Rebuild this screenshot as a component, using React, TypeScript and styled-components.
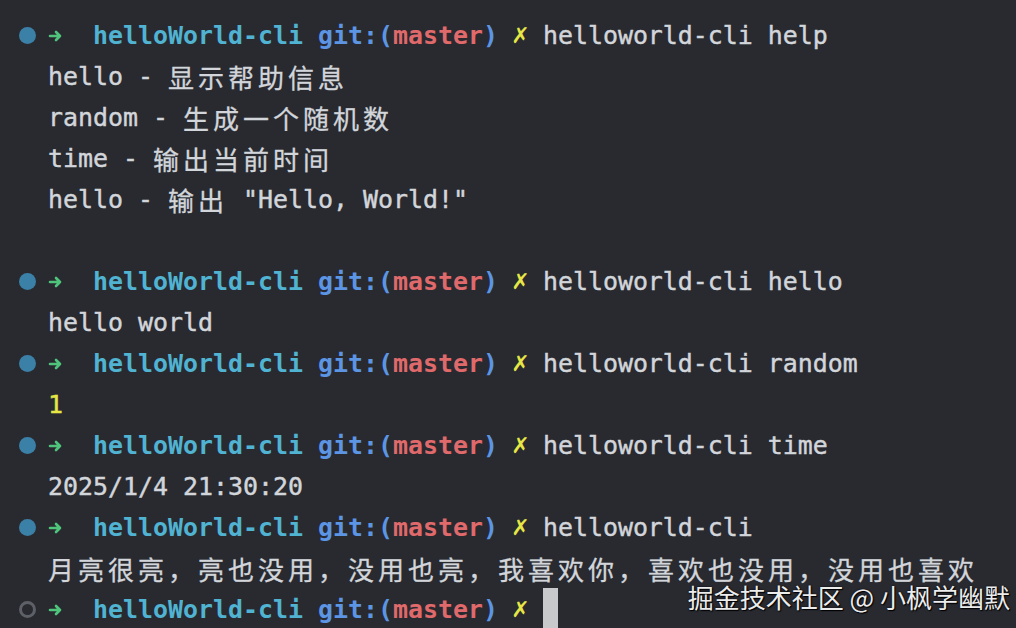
import React from "react";
import styled, { createGlobalStyle } from "styled-components";

const Global = createGlobalStyle`
  html, body { margin: 0; padding: 0; background: #282a30; }
  #root { width: 1016px; height: 628px; overflow: hidden; }
`;

const Terminal = styled.div`
  position: relative;
  box-sizing: border-box;
  width: 1016px;
  height: 628px;
  overflow: hidden;
  background: #282a30;
  padding-top: 15px;
  display: flex;
  flex-direction: column;
  font-family: "DejaVu Sans Mono", "Noto Sans CJK SC", monospace;
  font-size: 24.92px;
  color: #d2d5da;
`;

const Row = styled.div`
  display: grid;
  grid-template-columns: 48px 1fr;
  height: 41px;
  align-items: center;
  flex-shrink: 0;
`;

const Gutter = styled.div`
  display: flex;
  align-items: center;
  justify-content: center;
  padding-left: 6px;
`;

const Dot = styled.span<{ $hollow?: boolean }>`
  box-sizing: border-box;
  width: 17px;
  height: 17px;
  border-radius: 50%;
  background: ${(p) => (p.$hollow ? "transparent" : "#3b80a6")};
  border: ${(p) => (p.$hollow ? "3px solid #5d6066" : "none")};
`;

const Line = styled.div`
  white-space: pre;
  line-height: 41px;
  display: flex;
  align-items: center;
`;

const Text = styled.span<{ $c?: string; $bold?: boolean }>`
  white-space: pre;
  color: ${(p) => p.$c ?? "inherit"};
  font-weight: ${(p) => (p.$bold ? 700 : 400)};
  -webkit-text-stroke: ${(p) => (p.$bold ? "0" : "0.45px")} currentColor;
`;

const Wide = styled.span`
  white-space: pre;
  font-family: "Noto Sans CJK SC", sans-serif;
  font-size: 26px;
  letter-spacing: 4px;
  -webkit-text-stroke: 0.3px currentColor;
`;

const Cell = styled.span`
  display: inline-flex;
  width: 15px;
  justify-content: center;
  align-items: center;
`;

const Mark = styled(Cell)`
  color: #e6e645;
  font-weight: 700;
  font-family: "DejaVu Sans", sans-serif;
  font-size: 22px;
`;

const Cursor = styled.span`
  display: inline-block;
  width: 15px;
  height: 41px;
  margin-top: -3px;
  background: #c8c9cb;
`;

const Watermark = styled.div`
  position: absolute;
  right: 6px;
  bottom: 18px;
  font-family: "Noto Sans CJK SC", sans-serif;
  font-size: 26px;
  line-height: 1;
  color: #ececec;
  text-shadow: 0 0 2px #000, 1px 1px 1px #000;
  white-space: pre;
`;

const C = {
  green: "#4fc47b",
  cyan: "#51b3d2",
  blue: "#5c95e3",
  red: "#e0696b",
  yellow: "#e6e645",
};

const Arrow = () => (
  <Cell>
    <svg width="15" height="12" viewBox="0 0 15 12">
      <path d="M2 6 H12 M8 2 L12 6 L8 10" fill="none" stroke={C.green} strokeWidth="2.6" strokeLinecap="round" strokeLinejoin="round" />
    </svg>
  </Cell>
);

const Prompt: React.FC<{ cmd?: string; hollow?: boolean; cursor?: boolean }> = ({ cmd, hollow, cursor }) => (
  <Row>
    <Gutter>
      <Dot $hollow={hollow} />
    </Gutter>
    <Line>
      <Arrow />
      <Text>{"  "}</Text>
      <Text $c={C.cyan} $bold>helloWorld-cli</Text>
      <Text> </Text>
      <Text $c={C.blue} $bold>git:(</Text>
      <Text $c={C.red} $bold>master</Text>
      <Text $c={C.blue} $bold>)</Text>
      <Text> </Text>
      <Mark>✗</Mark>
      <Text> </Text>
      {cmd && <Text>{cmd}</Text>}
      {cursor && <Cursor />}
    </Line>
  </Row>
);

const Out: React.FC<{ children?: React.ReactNode }> = ({ children }) => (
  <Row>
    <Gutter />
    <Line>{children}</Line>
  </Row>
);

export default function App() {
  return (
    <>
      <Global />
      <Terminal>
        <Prompt cmd="helloworld-cli help" />
        <Out>
          <Text>hello - </Text>
          <Wide>显示帮助信息</Wide>
        </Out>
        <Out>
          <Text>random - </Text>
          <Wide>生成一个随机数</Wide>
        </Out>
        <Out>
          <Text>time - </Text>
          <Wide>输出当前时间</Wide>
        </Out>
        <Out>
          <Text>hello - </Text>
          <Wide>输出</Wide>
          <Text> "Hello, World!"</Text>
        </Out>
        <Out />
        <Prompt cmd="helloworld-cli hello" />
        <Out>
          <Text>hello world</Text>
        </Out>
        <Prompt cmd="helloworld-cli random" />
        <Out>
          <Text $c={C.yellow}>1</Text>
        </Out>
        <Prompt cmd="helloworld-cli time" />
        <Out>
          <Text>2025/1/4 21:30:20</Text>
        </Out>
        <Prompt cmd="helloworld-cli" />
        <Out>
          <Wide>月亮很亮，亮也没用，没用也亮，我喜欢你，喜欢也没用，没用也喜欢</Wide>
        </Out>
        <Prompt hollow cursor />
        <Watermark>掘金技术社区 @ 小枫学幽默</Watermark>
      </Terminal>
    </>
  );
}
